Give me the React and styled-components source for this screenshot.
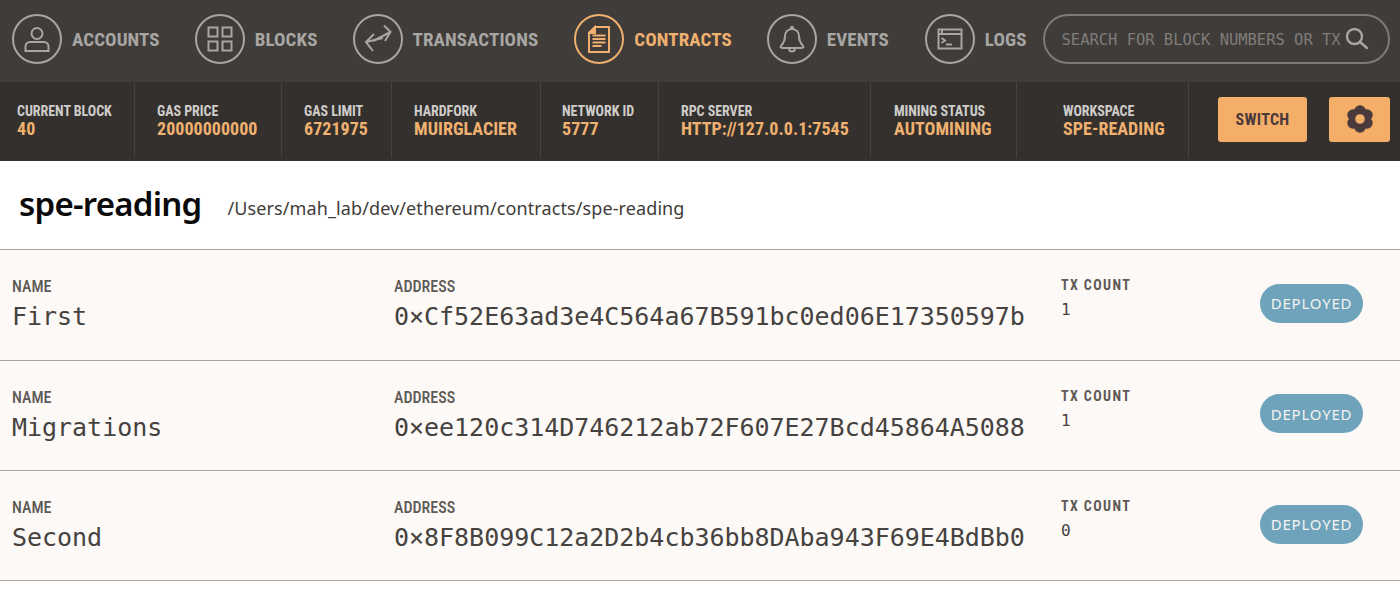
import React from "react";
import styled, { createGlobalStyle } from "styled-components";

const Global = createGlobalStyle`
  html, body { margin: 0; padding: 0; background: #fff; }
  body { font-family: "Noto Sans", sans-serif; overflow: hidden; }
`;
const cond = `"Roboto Condensed", "Liberation Sans Narrow", Roboto, sans-serif`;
const mono = `"DejaVu Sans Mono", "Liberation Mono", monospace`;

const TopBar = styled.nav`
  height: 82px; background: #3f3c39; display: flex; align-items: center;
  padding: 0 10px 4px 12px; box-sizing: border-box;
`;
const NavItem = styled.div`
  display: flex; align-items: center; gap: 10px; margin-right: ${p => p.$gap}px;
  color: ${p => (p.$active ? "#f0b070" : "#a8a6a3")};
`;
const NavCircle = styled.div`
  width: 50px; height: 50px; box-sizing: border-box; border-radius: 50%;
  border: 2px solid currentColor; display: flex; align-items: center; justify-content: center;
`;
const NavLabel = styled.span`
  font: 700 19px ${cond}; font-stretch: condensed; letter-spacing: .1px; white-space: nowrap;
`;
const Search = styled.div`
  flex: 1; height: 50px; box-sizing: border-box; border: 2px solid #7d7a77; border-radius: 25px;
  display: flex; align-items: center; gap: 3px; padding-left: 17px; color: #a8a6a3;
`;
const SearchText = styled.span`
  font: 15.5px ${mono}; color: #7f7c79; white-space: nowrap; letter-spacing: -.03px; padding-top: 1px;
`;
const StatBar = styled.div`
  height: 79px; background: #33302d; display: flex; align-items: stretch; box-sizing: border-box;
  padding-bottom: 3px;
`;
const Stat = styled.div`
  box-sizing: border-box; width: ${p => p.$w}px; padding-left: ${p => p.$pad}px;
  border-right: 1px solid #45423f; display: flex; flex-direction: column; justify-content: center;
`;
const StatLabel = styled.div`
  font: 700 14px/16px ${cond}; font-stretch: condensed; color: #cfcdca; white-space: nowrap; letter-spacing: -.05px;
`;
const StatValue = styled.div`
  font: 700 18px/19px ${cond}; font-stretch: condensed; color: #f0b070; white-space: nowrap; letter-spacing: .04px;
`;
const Actions = styled.div`
  flex: 1; display: flex; align-items: center; justify-content: flex-end; gap: 22px; padding: 0 10px 2px 0;
`;
const ActionButton = styled.div`
  width: ${p => p.$w}px; height: 45px; border-radius: 3px; background: #f4ae67; color: #4a3a3c;
  display: flex; align-items: center; justify-content: center;
  font: 700 16px ${cond}; font-stretch: condensed; letter-spacing: .3px;
`;
const Header = styled.header`
  height: 88px; display: flex; align-items: center; padding-left: 19px; gap: 26px;
  box-sizing: border-box; padding-bottom: 3px;
`;
const Title = styled.h1`
  margin: 0; font: 600 33px "Noto Sans", sans-serif; color: #0a0a0a; letter-spacing: -.75px;
`;
const Path = styled.span`
  font: 400 18px "Noto Sans", sans-serif; color: #3f3c39; letter-spacing: .1px; padding-top: 9px;
`;
const Row = styled.section`
  height: 110.5px; box-sizing: border-box; background: #fdf9f6; border-top: 1px solid #a9a7a3;
  display: grid; grid-template-columns: 382px 667px 199px 103px; align-items: center; padding-left: 12px;
  &:last-child { height: 111px; border-bottom: 1px solid #a9a7a3; }
`;
const Cell = styled.div`
  display: flex; flex-direction: column; padding-top: 4px;
`;
const CountCell = styled.div`
  align-self: start; display: flex; flex-direction: column; padding-top: 25.4px;
`;
const RowLabel = styled.div`
  font: 500 16px/20px ${cond}; font-stretch: condensed; color: #5e5a56; margin-top: -1px;
`;
const CountLabel = styled.div`
  font: 700 14px/20px ${cond}; font-stretch: condensed; color: #5e5a56; letter-spacing: 1.4px; margin-bottom: 5px;
`;
const RowValue = styled.div`
  font: 25px/36px ${mono}; color: #45423f; white-space: nowrap; letter-spacing: -.03px; margin-top: 2px;
`;
const CountValue = styled.div`
  font: 16px/20px ${mono}; color: #45423f;
`;
const Badge = styled.div`
  height: 39px; width: 103px; border-radius: 20px; background: #6fa3bb; color: #f4f3f1; margin-top: -3px;
  display: flex; align-items: center; justify-content: center;
  font: 400 15px "Noto Sans", sans-serif; letter-spacing: .8px;
`;

const Svg = ({ children, w = 30, h = 30 }) => (
  <svg width={w} height={h} viewBox={`0 0 ${w} ${h}`} fill="none" stroke="currentColor" strokeWidth="2">{children}</svg>
);
const IconUser = () => <Svg><circle cx="15" cy="9.500" r="5.500" /><path d="M3.500 27v-4.500c0-2.500 2-4.500 4.500-4.500h14c2.500 0 4.500 2 4.500 4.500V27zM3.500 27h23" /></Svg>;
const IconGrid = () => <Svg><rect x="3.500" y="3.500" width="9" height="9" /><rect x="17.500" y="3.500" width="9" height="9" /><rect x="3.500" y="17.500" width="9" height="9" /><rect x="17.500" y="17.500" width="9" height="9" /></Svg>;
const IconSwap = () => <Svg><path d="M10 17L27.500 8M21 1.500L27.500 8 22 17" /><path d="M20 14L3 18M11 10l-8 8 7 9" /></Svg>;
const IconDoc = () => (
  <Svg w={22} h={28}>
    <path d="M7 2h14v25H1V8z" />
    <path d="M7 2v6H1z" fill="currentColor" />
    <path d="M4.500 10.500h13M4.500 14h13M4.500 17.500h13M4.500 21h9" strokeWidth="2.200" />
  </Svg>
);
const IconBell = () => (
  <Svg>
    <path d="M15 5c-4.500 0-7 3.500-7 7.500 0 5-2 7-4 9.500-.8 1-.2 2 1 2h20c1.200 0 1.800-1 1-2-2-2.500-4-4.500-4-9.500 0-4-2.500-7.500-7-7.500z" strokeLinejoin="round" />
    <path d="M12 24.500a3 3 0 0 0 6 0" />
    <circle cx="15" cy="3.800" r="1" />
  </Svg>
);
const IconTerm = () => <Svg w={26} h={22}><rect x="1.500" y="1.500" width="23" height="19" /><path d="M1.500 6h23M5 1.500V6M4.500 10l3.500 2.500-3.500 2.500M9 16.500h6" /></Svg>;
const IconSearch = () => <svg width="26" height="26" viewBox="0 0 26 26" fill="none" stroke="#a8a6a3" strokeWidth="2.400" strokeLinecap="round"><circle cx="10.500" cy="10.500" r="7.500" /><path d="M16 16l7 6" /></svg>;
const IconGear = () => (
  <svg width="28" height="28" viewBox="-14 -14 28 28" fill="#4a3a3c">
    {[0, 60, 120, 180, 240, 300].map(a => (
      <circle key={a} r="5.800" cx={8 * Math.sin((a * Math.PI) / 180)} cy={-8 * Math.cos((a * Math.PI) / 180)} />
    ))}
    <circle r="9" />
    <circle r="4.800" fill="#f4ae67" />
  </svg>
);

const nav = [
  ["ACCOUNTS", <IconUser />, 35],
  ["BLOCKS", <IconGrid />, 35],
  ["TRANSACTIONS", <IconSwap />, 36],
  ["CONTRACTS", <IconDoc />, 35, true],
  ["EVENTS", <IconBell />, 36],
  ["LOGS", <IconTerm />, 16],
];
const stats = [
  ["CURRENT BLOCK", "40", 135, 17],
  ["GAS PRICE", "20000000000", 147, 22],
  ["GAS LIMIT", "6721975", 110, 22],
  ["HARDFORK", "MUIRGLACIER", 149, 22],
  ["NETWORK ID", "5777", 118, 21],
  ["RPC SERVER", "HTTP://127.0.0.1:7545", 212, 22],
  ["MINING STATUS", "AUTOMINING", 146, 23],
  ["WORKSPACE", "SPE-READING", 172, 46],
];
const rows = [
  ["First", "0×Cf52E63ad3e4C564a67B591bc0ed06E17350597b", "1"],
  ["Migrations", "0×ee120c314D746212ab72F607E27Bcd45864A5088", "1"],
  ["Second", "0×8F8B099C12a2D2b4cb36bb8DAba943F69E4BdBb0", "0"],
];

export default function App() {
  return (
    <>
      <Global />
      <TopBar>
        {nav.map(([label, icon, gap, active]) => (
          <NavItem key={label} $gap={gap} $active={active}>
            <NavCircle>{icon}</NavCircle>
            <NavLabel>{label}</NavLabel>
          </NavItem>
        ))}
        <Search>
          <SearchText>SEARCH FOR BLOCK NUMBERS OR TX</SearchText>
          <IconSearch />
        </Search>
      </TopBar>
      <StatBar>
        {stats.map(([label, value, w, pad]) => (
          <Stat key={label} $w={w} $pad={pad}>
            <StatLabel>{label}</StatLabel>
            <StatValue>{value}</StatValue>
          </Stat>
        ))}
        <Actions>
          <ActionButton $w={89}>SWITCH</ActionButton>
          <ActionButton $w={61}><IconGear /></ActionButton>
        </Actions>
      </StatBar>
      <Header>
        <Title>spe-reading</Title>
        <Path>/Users/mah_lab/dev/ethereum/contracts/spe-reading</Path>
      </Header>
      {rows.map(([name, addr, tx]) => (
        <Row key={name}>
          <Cell><RowLabel>NAME</RowLabel><RowValue>{name}</RowValue></Cell>
          <Cell><RowLabel>ADDRESS</RowLabel><RowValue>{addr}</RowValue></Cell>
          <CountCell><CountLabel>TX COUNT</CountLabel><CountValue>{tx}</CountValue></CountCell>
          <Badge>DEPLOYED</Badge>
        </Row>
      ))}
    </>
  );
}
